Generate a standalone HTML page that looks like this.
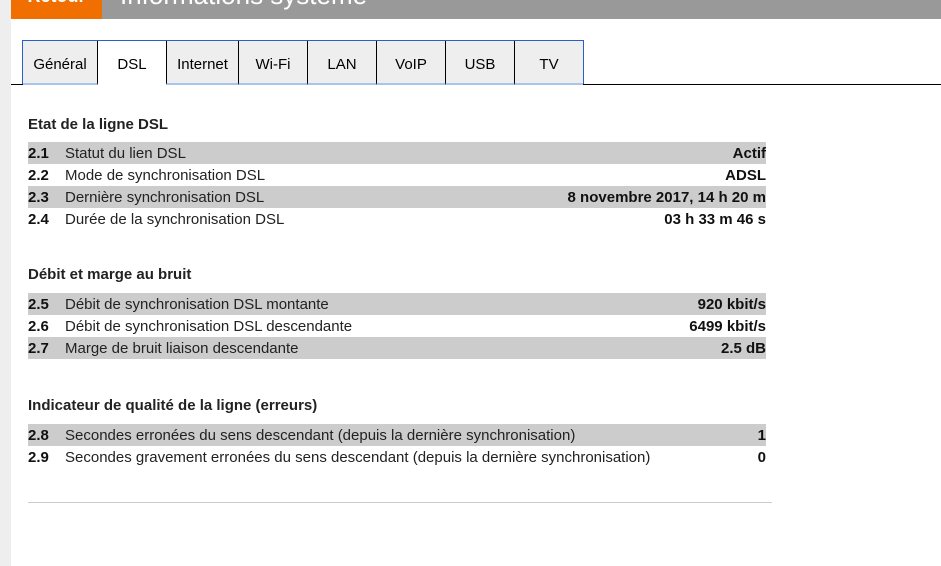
<!DOCTYPE html>
<html><head><meta charset="utf-8"><style>
body{margin:0;width:941px;height:566px;overflow:hidden;background:#fff;font-family:"Liberation Sans",Arial,sans-serif;color:#000;position:relative}
.lbar{position:absolute;left:0;top:0;width:11px;height:566px;background:#eee}
.or{position:absolute;left:11px;top:-13px;width:91px;height:32px;background:#f16e00;color:#fff;font-size:18px;font-weight:bold;text-align:center;line-height:18px}
.gr{position:absolute;left:102px;top:-13px;right:0;height:32px;background:#999;color:#fff;font-size:26px;line-height:16px;padding-left:18px}
.tabline{position:absolute;left:11px;right:0;top:84px;height:1px;background:#000}
.tabs{position:absolute;left:22px;top:40px;height:44px;display:flex;border:1px solid #2a5fc8;border-bottom:none;box-sizing:border-box}
.tab{line-height:47px;text-align:center;font-size:15px;background:#eee;border-right:1px solid #000;border-bottom:2px solid #a8c4f0;box-sizing:border-box;height:44px}
.tab:last-child{border-right:none}
.tab.a{background:#fff;border-bottom:2px solid #fff}
h3{position:absolute;left:28px;margin:0;font-size:15px;font-weight:bold;color:#222}
.row{position:absolute;left:28px;width:738px;height:22px;line-height:23px;font-size:15px;color:#222}
.row.s{background:#ccc}
.row b.n{position:absolute;left:0;color:#111}
.row span{position:absolute;left:37px}
.row b.v{position:absolute;right:0;color:#111}
.hr{position:absolute;left:28px;top:502px;width:744px;height:1px;background:#ccc}
</style></head><body>
<div class="lbar"></div>
<div class="or">Retour</div>
<div class="gr">Informations système</div>
<div class="tabline"></div>
<div class="tabs">
<div class="tab" style="width:75px">Général</div>
<div class="tab a" style="width:69px">DSL</div>
<div class="tab" style="width:72px">Internet</div>
<div class="tab" style="width:69px">Wi-Fi</div>
<div class="tab" style="width:69px">LAN</div>
<div class="tab" style="width:69px">VoIP</div>
<div class="tab" style="width:69px">USB</div>
<div class="tab" style="width:68px">TV</div>
</div>
<h3 style="top:116px">Etat de la ligne DSL</h3>
<div class="row s" style="top:142px"><b class="n">2.1</b><span>Statut du lien DSL</span><b class="v">Actif</b></div>
<div class="row" style="top:164px"><b class="n">2.2</b><span>Mode de synchronisation DSL</span><b class="v">ADSL</b></div>
<div class="row s" style="top:186px"><b class="n">2.3</b><span>Dernière synchronisation DSL</span><b class="v">8 novembre 2017, 14 h 20 m</b></div>
<div class="row" style="top:208px"><b class="n">2.4</b><span>Durée de la synchronisation DSL</span><b class="v">03 h 33 m 46 s</b></div>
<h3 style="top:266px">Débit et marge au bruit</h3>
<div class="row s" style="top:293px"><b class="n">2.5</b><span>Débit de synchronisation DSL montante</span><b class="v">920 kbit/s</b></div>
<div class="row" style="top:315px"><b class="n">2.6</b><span>Débit de synchronisation DSL descendante</span><b class="v">6499 kbit/s</b></div>
<div class="row s" style="top:337px"><b class="n">2.7</b><span>Marge de bruit liaison descendante</span><b class="v">2.5 dB</b></div>
<h3 style="top:397px">Indicateur de qualité de la ligne (erreurs)</h3>
<div class="row s" style="top:424px"><b class="n">2.8</b><span>Secondes erronées du sens descendant (depuis la dernière synchronisation)</span><b class="v">1</b></div>
<div class="row" style="top:446px"><b class="n">2.9</b><span>Secondes gravement erronées du sens descendant (depuis la dernière synchronisation)</span><b class="v">0</b></div>
<div class="hr"></div>
</body></html>
